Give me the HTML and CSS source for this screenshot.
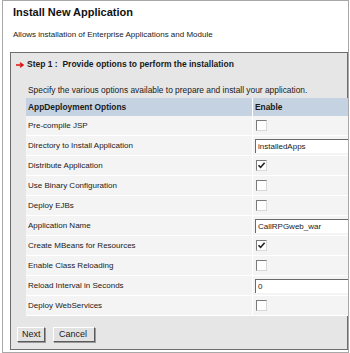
FILE: index.html
```html
<!DOCTYPE html>
<html lang="en">
<head>
    <meta charset="UTF-8">
    <title>Install New Application</title>
    <link rel="stylesheet" href="styles.css">
</head>
<body>
    <div class="page">
        <div class="page-title">Install New Application</div>
        <div class="page-desc">Allows installation of Enterprise Applications and Module</div>

        <div class="step-box">
            <div class="step-title"><svg class="step-arrow" viewBox="0 0 8 6"><path d="M0 3 H6 M4 0.8 L7 3 L4 5.2" fill="none" stroke="#e01010" stroke-width="1.4"/></svg>Step 1 :&nbsp; Provide options to perform the installation</div>
            <div class="step-intro">Specify the various options available to prepare and install your application.</div>

            <table class="options">
                <thead>
                    <tr>
                        <th class="col-name">AppDeployment Options</th>
                        <th class="col-enable">Enable</th>
                    </tr>
                </thead>
                <tbody>
                    <tr><td>Pre-compile JSP</td><td><span class="check"></span></td></tr>
                    <tr><td>Directory to Install Application</td><td><span class="field">installedApps</span></td></tr>
                    <tr><td>Distribute Application</td><td><span class="check checked"><svg viewBox="0 0 9 9"><path d="M1.5 4.2 L3.6 6.4 L7.6 1.8" fill="none" stroke="#222" stroke-width="1.6"/></svg></span></td></tr>
                    <tr><td>Use Binary Configuration</td><td><span class="check"></span></td></tr>
                    <tr><td>Deploy EJBs</td><td><span class="check"></span></td></tr>
                    <tr><td>Application Name</td><td><span class="field">CallRPGweb_war</span></td></tr>
                    <tr><td>Create MBeans for Resources</td><td><span class="check checked"><svg viewBox="0 0 9 9"><path d="M1.5 4.2 L3.6 6.4 L7.6 1.8" fill="none" stroke="#222" stroke-width="1.6"/></svg></span></td></tr>
                    <tr><td>Enable Class Reloading</td><td><span class="check"></span></td></tr>
                    <tr><td>Reload Interval in Seconds</td><td><span class="field">0</span></td></tr>
                    <tr><td>Deploy WebServices</td><td><span class="check"></span></td></tr>
                </tbody>
            </table>

            <div class="buttons">
                <span class="btn btn-next">Next</span>
                <span class="btn btn-cancel">Cancel</span>
            </div>
        </div>
    </div>
</body>
</html>
```

FILE: styles.css
```css
:root {
    --frame-color: #a8a8a8;
    --box-border: #6e6e6e;
    --box-bg: #e6e6e6;
    --row-bg: #f4f4f4;
    --head-bg: #c4d2e2;
    --text-color: #1a1a1a;
}

body {
    margin: 0;
    font-family: "Liberation Sans", Arial, sans-serif;
    color: var(--text-color);
    background: #ffffff;
}

.page {
    margin-left: 2px;
    width: 345px;
    height: 351px;
    border: 1px solid var(--frame-color);
    overflow: hidden;
    background: #ffffff;
}

.page-title {
    margin-top: 5px;
    padding-left: 10px;
    font-size: 11px;
    line-height: 13px;
    font-weight: bold;
    color: #111;
}

.page-desc {
    margin-top: 11px;
    padding-left: 10px;
    font-size: 8px;
    line-height: 10px;
}

.step-box {
    margin: 12px 0 0 7px;
    border: 1px solid var(--box-border);
    background: var(--box-bg);
    height: 296px;
}

.step-title {
    display: flex;
    align-items: center;
    padding: 6px 0 0 5px;
    font-size: 8.5px;
    line-height: 11px;
    font-weight: bold;
    white-space: pre;
}

.step-arrow {
    width: 8px;
    height: 6px;
    margin-right: 3px;
}

.step-intro {
    margin-top: 15px;
    padding-left: 17px;
    font-size: 8.4px;
    line-height: 10px;
}

.options {
    margin: 3px 0 0 15px;
    width: 322px;
    border-collapse: collapse;
    font-size: 8px;
}

.options th {
    height: 18px;
    padding: 0 0 0 2px;
    text-align: left;
    font-size: 8.4px;
    font-weight: bold;
    background: var(--head-bg);
}

.col-name {
    width: 224px;
}

.options td {
    height: 19px;
    padding: 0 0 0 2px;
    background: var(--row-bg);
    border-bottom: 1px solid #ffffff;
    vertical-align: middle;
}

.options td + td,
.options th + th {
    border-left: 1px solid #ffffff;
}

.check {
    display: block;
    margin-left: 1px;
    width: 9px;
    height: 9px;
    background: #ffffff;
    border-top: 1px solid #7a7a7a;
    border-left: 1px solid #7a7a7a;
    border-right: 1px solid #d8d8d8;
    border-bottom: 1px solid #d8d8d8;
}

.check svg {
    display: block;
    width: 9px;
    height: 9px;
}

.field {
    display: block;
    height: 13px;
    line-height: 13px;
    padding-left: 2px;
    background: #ffffff;
    border-top: 1px solid #6a6a6a;
    border-left: 1px solid #6a6a6a;
    margin-right: -6px;
    font-size: 8px;
}

.buttons {
    display: flex;
    gap: 8px;
    margin: 11px 0 0 6px;
}

.btn {
    display: block;
    height: 13px;
    line-height: 13px;
    padding: 0 4px;
    font-size: 9px;
    background: #e2e2e2;
    border-top: 1px solid #ffffff;
    border-left: 1px solid #ffffff;
    border-right: 1px solid #5a5a5a;
    border-bottom: 1px solid #5a5a5a;
    box-shadow: 1px 1px 0 #9a9a9a;
}

.btn-next {
    width: 18px;
}

.btn-cancel {
    width: 31px;
    padding-left: 5px;
}
```
